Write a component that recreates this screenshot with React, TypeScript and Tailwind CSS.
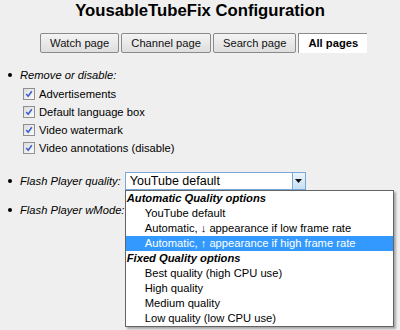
import React from 'react'

const font = { fontFamily: '"Liberation Sans", Arial, sans-serif' }

function Check() {
  return (
    <span className="flex h-[12px] w-[12px] shrink-0 items-center justify-center border border-[#8f8f8f] bg-gradient-to-br from-[#dcdcdc] to-[#fbfbfb]">
      <svg width="8" height="8" viewBox="0 0 8 8">
        <path d="M1.2 4 L3.2 6.3 L6.8 1.3" fill="none" stroke="#3b5fc9" strokeWidth="1.5" />
      </svg>
    </span>
  )
}

function Tab({ label, active }: { label: string; active?: boolean }) {
  return active ? (
    <div className="flex h-[20px] items-center border-l border-t border-[#8a8a8a] bg-white px-[9px] font-bold text-black">
      {label}
    </div>
  ) : (
    <div className="flex h-[20px] items-center rounded-[2px] border border-[#8a8a8a] bg-gradient-to-b from-[#f4f4f4] to-[#dedede] px-[9px] text-[#111]">
      {label}
    </div>
  )
}

const quality = [
  { label: 'Automatic Quality options', group: true },
  { label: 'YouTube default' },
  { label: 'Automatic, ↓ appearance if low frame rate' },
  { label: 'Automatic, ↑ appearance if high frame rate', selected: true },
  { label: 'Fixed Quality options', group: true },
  { label: 'Best quality (high CPU use)' },
  { label: 'High quality' },
  { label: 'Medium quality' },
  { label: 'Low quality (low CPU use)' },
]

export default function App() {
  return (
    <div className="h-[330px] w-[400px] overflow-hidden bg-[#efefef] text-[11.2px] text-black" style={font}>
      <h1 className="pt-[1px] text-center text-[16.7px] font-bold leading-[20px]">YousableTubeFix Configuration</h1>

      <div className="mt-[12px] flex gap-[2px] pl-[40px]">
        <Tab label="Watch page" />
        <Tab label="Channel page" />
        <Tab label="Search page" />
        <Tab label="All pages" active />
      </div>

      <ul className="mt-[14px] pl-[8px]">
        <li className="flex flex-col">
          <div className="flex h-[16px] items-center gap-[8px]">
            <span className="h-[4px] w-[4px] rounded-full bg-black" />
            <span className="italic">Remove or disable:</span>
          </div>
          <div className="mt-[3px] flex flex-col gap-[2px] pl-[15px]">
            {['Advertisements', 'Default language box', 'Video watermark', 'Video annotations (disable)'].map((t) => (
              <label key={t} className="flex h-[16px] items-center gap-[4px]">
                <Check />
                <span>{t}</span>
              </label>
            ))}
          </div>
        </li>

        <li className="mt-[16px] flex items-center">
          <span className="h-[4px] w-[4px] rounded-full bg-black" />
          <span className="ml-[8px] italic">Flash Player quality:</span>
          <div className="relative ml-[4px]">
            <div className="flex h-[18px] w-[181px] items-center border border-[#7aa7d6] bg-white">
              <span className="flex-1 pl-[4px] text-[12.5px] leading-[16px]">YouTube default</span>
              <span className="flex h-[16px] w-[13px] items-center justify-center border-l border-[#7aa7d6] bg-gradient-to-b from-[#eaf4fc] to-[#c8e0f4]">
                <svg width="7" height="4" viewBox="0 0 7 4">
                  <path d="M0 0 H7 L3.5 4 Z" fill="#111" />
                </svg>
              </span>
            </div>
            <div className="absolute left-0 top-[18px] z-10 w-[269px] border border-[#646464] bg-white shadow-[2px_2px_2px_rgba(0,0,0,0.3)]">
              {quality.map((q) => (
                <div
                  key={q.label}
                  className={
                    q.group
                      ? 'h-[15px] pl-[1px] font-bold italic leading-[15px]'
                      : q.selected
                        ? 'h-[15px] bg-[#3399ff] pl-[19px] leading-[15px] text-white'
                        : 'h-[15px] pl-[19px] leading-[15px]'
                  }
                >
                  {q.label}
                </div>
              ))}
            </div>
          </div>
        </li>

        <li className="mt-[12px] flex h-[16px] items-center gap-[8px]">
          <span className="h-[4px] w-[4px] rounded-full bg-black" />
          <span className="italic">Flash Player wMode:</span>
        </li>
      </ul>
    </div>
  )
}
